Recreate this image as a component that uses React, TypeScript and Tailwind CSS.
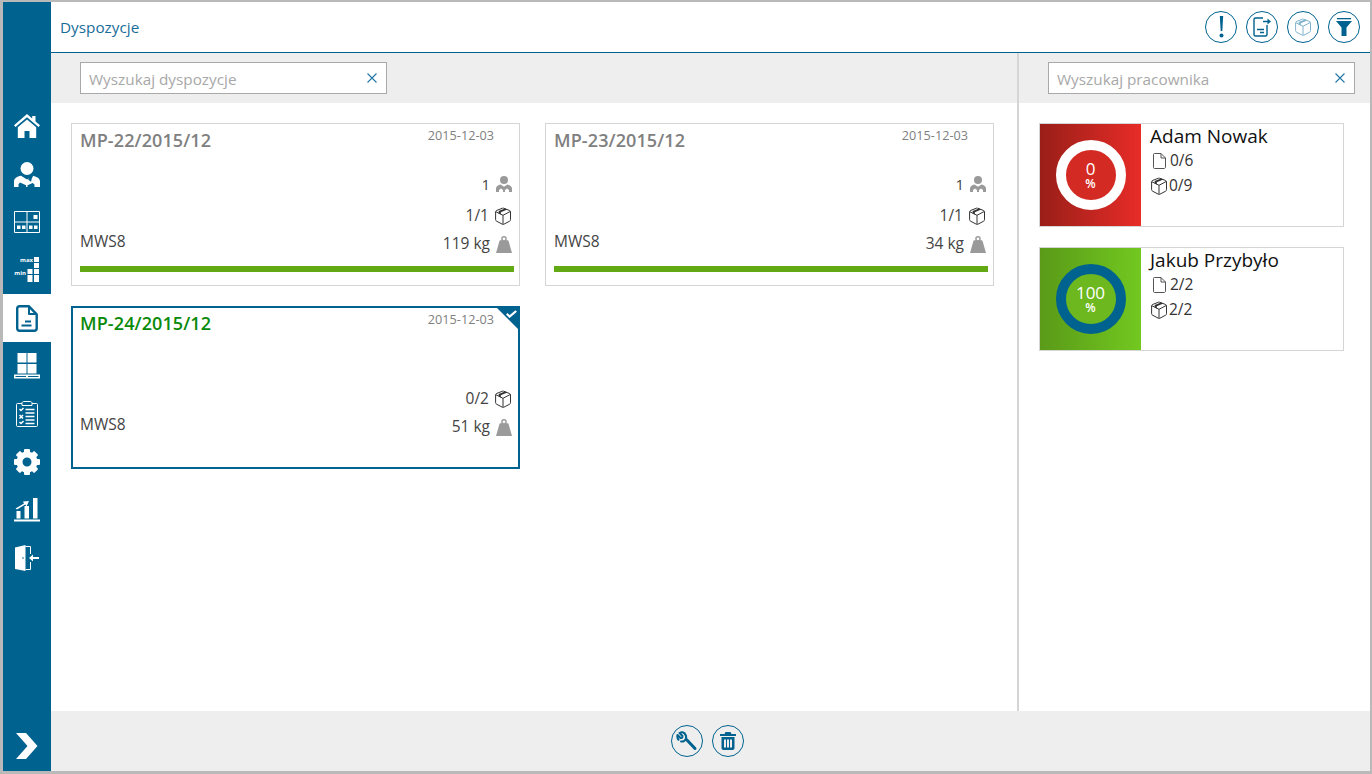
import type { ReactNode } from "react";

const font = { fontFamily: '"Open Sans", "Noto Sans", sans-serif' };

const BoxIcon = ({ color = "#333" }: { color?: string }) => (
  <svg width="18" height="18" viewBox="0 0 18 18" fill="none">
    <path d="M2.800 3.400 8.500 1.200c.4-.1.800-.1 1.100 0l5.700 2.200c.7.300 1.200.7 1.200 1.500v7.800c0 .7-.3 1.200-.9 1.500l-5.900 3.100c-.4.200-.8.200-1.200 0L2.600 14.200c-.6-.3-1-.8-1-1.500V4.900c0-.8.500-1.200 1.200-1.500Z" stroke={color} strokeWidth="1" />
    <path d="M2 4.800l7 3.500 7.200-3.800M9 8.300V17.200" stroke={color} strokeWidth="1" />
    <path d="M4.700 6.500V4l6.300-2.400 2.300.9L6.800 5.200v2.300Z" fill={color} />
  </svg>
);

const PersonIcon = () => (
  <svg width="16" height="16" viewBox="0 0 16 16" fill="#9a9a9a">
    <circle cx="8" cy="4" r="4" />
    <path d="M0 16v-3.500C0 10.500 2 9.200 4.500 8.600L8 10.800l3.500-2.200c2.500.6 4.500 1.900 4.500 3.900V16h-3v-2l-2-1.500L9 14v2H7v-2l-2-1.500L3 14v2Z" />
  </svg>
);

const WeightIcon = () => (
  <svg width="16" height="17" viewBox="0 0 16 17" fill="#9a9a9a">
    <path d="M8 0a2.800 2.800 0 0 1 2.800 2.800c0 .5-.1 1-.4 1.400h1.300c.4 0 .7.200.8.600L16 17H0L3.500 4.800c.1-.4.400-.6.800-.6h1.300c-.3-.4-.4-.9-.4-1.400A2.800 2.800 0 0 1 8 0Zm0 1.400a1.400 1.400 0 1 0 0 2.800 1.400 1.400 0 0 0 0-2.800Z" fillRule="evenodd" />
  </svg>
);

const PageIcon = () => (
  <svg width="13" height="16" viewBox="0 0 13 16" fill="none" stroke="#555" strokeWidth="1">
    <path d="M1.500.5h6.500l4.500 4.500v9c0 .8-.5 1.500-1.300 1.500H1.500C.9 15.500.5 15 .5 14.300V1.500c0-.6.4-1 1-1Z" />
    <path d="M8 .5V5h4.500" />
  </svg>
);

const HomeIcon = () => (
  <svg width="26" height="24" viewBox="0 0 26 24" fill="#fff">
    <path d="M13 0 0 11.300l1.500 1.700L13 3.200 24.500 13l1.500-1.700-4.500-3.900V2h-3.300v2.600Z" />
    <path d="M13 5.500 3.800 13.300V24h6.700v-7h5v7h6.700V13.300Z" />
  </svg>
);

const UserIcon = () => (
  <svg width="26" height="25" viewBox="0 0 26 25" fill="#fff">
    <circle cx="13" cy="6.500" r="6.500" />
    <path d="M0 25v-5.500c0-3.300 3-5 7-5.800l6 3.800 2-1.200-.8 1.500 2.800 2 .8-3.300 1.400-2.800c3.600 1 6.800 2.600 6.800 5.800V25h-5.500v-2.500l-1.800-1.500-5.200 2.200V25h-1.400v-1.800L6 20.500 4.500 22.300V25Z" />
  </svg>
);

const GridIcon = () => (
  <svg width="26" height="22" viewBox="0 0 26 22" fill="none" stroke="#fff" strokeWidth="1">
    <path d="M.5.500h25v21H.5ZM.5 11h25M13 .5v21" />
    <g fill="#fff" stroke="none">
      <rect x="19.500" y="4" width="4" height="4" />
      <rect x="3" y="14.500" width="3.500" height="3.500" />
      <rect x="8" y="14.500" width="3.500" height="3.500" />
      <rect x="15" y="14.500" width="3.500" height="3.500" />
      <rect x="20" y="14.500" width="3.500" height="3.500" />
    </g>
  </svg>
);

const MaxMinIcon = () => (
  <div className="relative h-[26px] w-[26px]">
    <span className="absolute right-[7px] top-[0px] text-[6px] font-bold leading-[6px] text-white">max</span>
    <span className="absolute right-[14px] top-[13px] text-[6px] font-bold leading-[6px] text-white">min</span>
    <svg className="absolute inset-0" width="26" height="26" viewBox="0 0 26 26" fill="#fff">
      <rect x="20" y="0" width="5" height="5" />
      <rect x="20" y="6" width="5" height="5" />
      <rect x="20" y="12" width="5" height="5" />
      <rect x="13.500" y="12" width="5" height="5" />
      <rect x="20" y="18" width="5" height="7" />
      <rect x="13.500" y="18" width="5" height="7" />
    </svg>
  </div>
);

const DocIcon = () => (
  <svg width="22" height="27" viewBox="0 0 22 27" fill="none" stroke="#00628f" strokeWidth="2.400" strokeLinejoin="round">
    <path d="M3.500 1.300h9.500l7.700 8v13.900c0 1.900-1.100 2.600-2.500 2.600H3.500c-1.400 0-2.300-.9-2.300-2.600V3.500c0-1.400.9-2.200 2.300-2.200Z" />
    <path d="M13 1.300V9h7.700" strokeWidth="2" />
    <path d="M9 16.500h6M5.500 20.500h10" strokeWidth="1.800" />
  </svg>
);

const PalletIcon = () => (
  <svg width="26" height="26" viewBox="0 0 26 26" fill="#fff">
    <rect x="3.500" y="0" width="9" height="9.500" />
    <rect x="13.500" y="0" width="9" height="9.500" />
    <rect x="3.500" y="11" width="9" height="9.500" />
    <rect x="13.500" y="11" width="9" height="9.500" />
    <path d="M0 21.500h26V25.500H0Zm1.500 1.500v1h23v-1Z" fillRule="evenodd" />
    <rect x="12" y="22" width="2" height="3" />
  </svg>
);

const ClipboardIcon = () => (
  <svg width="22" height="26" viewBox="0 0 22 26" fill="none" stroke="#fff">
    <path d="M6 2.500H1.500c-.6 0-1 .4-1 1v21c0 .6.4 1 1 1h19c.6 0 1-.4 1-1v-21c0-.6-.4-1-1-1H16" strokeWidth="1" />
    <path d="M6 4.500V2.200C6 1 7 .5 8 .5h6c1 0 2 .5 2 1.700v2.300Z" strokeWidth="1" />
    <path d="M3.500 8 5 9.500l2.500-2.500M3.500 14l3.500 3.500M7 14l-3.500 3.500M3.500 21l1.500 1.500 2.500-2.500" strokeWidth="1.500" />
    <path d="M9.500 8.500h9M9.500 12h9M9.500 15.500h9M9.500 19h9M9.500 22.500h9" strokeWidth="1.500" />
  </svg>
);

const GearIcon = () => (
  <svg width="26" height="26" viewBox="0 0 26 26" fill="#fff">
    {[0, 45, 90, 135, 180, 225, 270, 315].map((a) => (
      <rect key={a} x="10" y="0" width="6" height="6" rx="1" transform={`rotate(${a} 13 13)`} />
    ))}
    <circle cx="13" cy="13" r="7.500" fill="none" stroke="#fff" strokeWidth="6" />
  </svg>
);

const ChartIcon = () => (
  <svg width="26" height="24" viewBox="0 0 26 24" fill="#fff">
    <rect x="0" y="21.500" width="26" height="2" />
    <rect x="2.500" y="13" width="4" height="7.500" />
    <rect x="10.500" y="8" width="4.500" height="12.500" />
    <rect x="19" y="0" width="4.500" height="20.500" />
    <path d="M1.500 10.500 10 5.500 9 3.500l6-.5-2.500 5.500-1.200-2L3 11.500Z" />
  </svg>
);

const DoorIcon = () => (
  <svg width="26" height="26" viewBox="0 0 26 26" fill="#fff">
    <path d="M1 2.500 11.500 0v26L1 24Z" />
    <circle cx="9" cy="13" r=".8" fill="#00628f" />
    <path d="M11.500 1.500H16.500V9M16.500 17V24.500H11.500" fill="none" stroke="#fff" strokeWidth="1" />
    <path d="M15 13l4-3.500V12h6v2h-6v2.500Z" />
  </svg>
);

const ChevronIcon = () => (
  <svg width="22" height="26" viewBox="0 0 22 26" fill="#fff">
    <path d="M0 0h10l11.500 13L10 26H0l11.500-13Z" />
  </svg>
);

const RoundButton = ({ children }: { children: ReactNode }) => (
  <div className="flex h-[32px] w-[32px] items-center justify-center rounded-full border-[1.500px] border-[#00628f]">
    {children}
  </div>
);

const NAV = [
  <HomeIcon key="home" />,
  <UserIcon key="user" />,
  <GridIcon key="grid" />,
  <MaxMinIcon key="maxmin" />,
  <DocIcon key="doc" />,
  <PalletIcon key="pallet" />,
  <ClipboardIcon key="clip" />,
  <GearIcon key="gear" />,
  <ChartIcon key="chart" />,
  <DoorIcon key="door" />,
];

const SearchBox = ({ placeholder }: { placeholder: string }) => (
  <div className="flex h-[32px] w-[307px] items-center justify-between border border-[#a9a9a9] bg-white pl-2 pr-[9px]">
    <span className="pt-[3px] text-[15.300px] text-[#a8a8a8]">{placeholder}</span>
    <svg width="10" height="10" viewBox="0 0 10 10" stroke="#1f78a4" strokeWidth="1.100" fill="none">
      <path d="M.5.500l9 9M9.500.500l-9 9" />
    </svg>
  </div>
);

type Order = {
  no: string;
  people?: string;
  boxes: string;
  kg: string;
  selected?: boolean;
  done?: boolean;
};

const ORDERS: Order[] = [
  { no: "MP-22/2015/12", people: "1", boxes: "1/1", kg: "119 kg", done: true },
  { no: "MP-23/2015/12", people: "1", boxes: "1/1", kg: "34 kg", done: true },
  { no: "MP-24/2015/12", boxes: "0/2", kg: "51 kg", selected: true },
];

const OrderCard = ({ order }: { order: Order }) => (
  <div
    className={`relative flex h-[163px] w-[449px] flex-col ${
      order.selected ? "border-2 border-[#00628f] pl-[7px] pr-[6px]" : "border border-[#d5d5d5] pl-[8px] pr-[7px]"
    }`}
  >
    {order.selected && (
      <>
        <div className="absolute right-[-2px] top-[-2px] h-0 w-0 border-l-[25px] border-t-[25px] border-l-transparent border-t-[#00628f]" />
        <svg className="absolute right-[1px] top-[2px]" width="11" height="8" viewBox="0 0 11 8" fill="none" stroke="#fff" strokeWidth="2.200">
          <path d="M.8 3.800l2.800 2.800L10.200 1" />
        </svg>
      </>
    )}
    <div className="flex items-start justify-between pr-[18px]">
      <span className={`text-[18px] font-semibold leading-[26px] tracking-[0.1px] ${order.selected ? "mt-[2px] text-[#0a8a0a]" : "mt-[3px] text-[#808080]"}`}>
        {order.no}
      </span>
      <span className="mt-[2px] text-[12.700px] leading-[18px] text-[#808080]">2015-12-03</span>
    </div>
    <div className={order.selected ? "h-[18px]" : "h-[18px]"} />
    <div className="flex h-[26px] items-center justify-end gap-[6px] text-[15px] text-[#444]">
      {order.people && (
        <>
          <span>{order.people}</span>
          <PersonIcon />
        </>
      )}
    </div>
    <div className="mt-[6px] flex h-[26px] items-center justify-end gap-[5px] text-[15.500px] text-[#444]">
      <span>{order.boxes}</span>
      <BoxIcon />
    </div>
    <div className="mt-[2px] flex h-[26px] items-center justify-between text-[15.500px] text-[#444]">
      <span className="-mt-[4px]">MWS8</span>
      <span className="flex items-center gap-[6px]">
        {order.kg}
        <WeightIcon />
      </span>
    </div>
    {order.done && <div className="mt-[9px] h-[6px] w-[434px] bg-[#63a914]" />}
  </div>
);

type Worker = {
  name: string;
  percent: string;
  docs: string;
  boxes: string;
  gradient: string;
  ring: string;
  inner: string;
};

const WORKERS: Worker[] = [
  {
    name: "Adam Nowak",
    percent: "0",
    docs: "0/6",
    boxes: "0/9",
    gradient: "bg-gradient-to-r from-[#9a1e18] to-[#e82c28]",
    ring: "border-white",
    inner: "bg-[#d42a24]",
  },
  {
    name: "Jakub Przybyło",
    percent: "100",
    docs: "2/2",
    boxes: "2/2",
    gradient: "bg-gradient-to-r from-[#5a9a18] to-[#72c820]",
    ring: "border-[#00628f]",
    inner: "bg-[#6cb81e]",
  },
];

const WorkerCard = ({ worker }: { worker: Worker }) => (
  <div className="flex h-[104px] w-[305px] border border-[#d5d5d5]">
    <div className={`flex h-full w-[101px] items-center justify-center ${worker.gradient}`}>
      <div className={`flex h-[70px] w-[70px] flex-col items-center justify-center rounded-full border-[10px] ${worker.ring} ${worker.inner} text-white`}>
        <span className="text-[17px] leading-[18px]">{worker.percent}</span>
        <span className="text-[12px] font-semibold leading-[12px]">%</span>
      </div>
    </div>
    <div className="flex flex-col pl-[9px] text-[#333]">
      <span className="text-[19px] leading-[24px] text-[#111]">{worker.name}</span>
      <div className="mt-[1px] flex h-[24px] items-center gap-[4px] pl-[3px] text-[15.500px]">
        <PageIcon />
        {worker.docs}
      </div>
      <div className="mt-[1px] flex h-[24px] items-center gap-[1px] text-[15.500px]">
        <BoxIcon />
        {worker.boxes}
      </div>
    </div>
  </div>
);

export default function App() {
  return (
    <div style={font} className="h-[774px] w-[1372px] overflow-hidden bg-white">
      <div className="flex h-full w-full border-b-[3px] border-l-[3px] border-r-2 border-t-2 border-[#b9b9b9]">
        <aside className="flex w-[48px] shrink-0 flex-col bg-[#00628f] pt-[100px]">
          {NAV.map((icon, i) => (
            <div key={i} className={`flex h-[48px] items-center justify-center ${i === 4 ? "bg-white" : ""}`}>
              {icon}
            </div>
          ))}
          <div className="mt-auto flex h-[60px] items-center justify-center pt-[10px]">
            <ChevronIcon />
          </div>
        </aside>

        <main className="flex min-w-0 flex-1 flex-col">
          <header className="flex h-[51px] shrink-0 items-center justify-between border-b border-[#00628f] pl-[9px] pr-[10px]">
            <span className="text-[15.300px] text-[#1a6d99]">Dyspozycje</span>
            <div className="flex gap-[9px]">
              <RoundButton>
                <svg width="5" height="22" viewBox="0 0 5 22" fill="#00628f">
                  <path d="M.8 0h3.400L3.300 15H1.700Z" />
                  <circle cx="2.500" cy="19.500" r="2" />
                </svg>
              </RoundButton>
              <RoundButton>
                <svg width="20" height="20" viewBox="0 0 20 20" fill="none" stroke="#00628f" strokeWidth="1.400">
                  <path d="M11 1H3.500C2.500 1 2 1.500 2 2.500v15c0 1 .5 1.500 1.500 1.500h10c1 0 1.500-.5 1.500-1.500V8" />
                  <path d="M5 12.500h7M8 15.500h4" />
                  <path d="M11 4.500h5" strokeWidth="1.500" />
                  <path d="M15.500 1.500l3.500 3-3.500 3Z" fill="#00628f" stroke="none" />
                </svg>
              </RoundButton>
              <RoundButton>
                <BoxIcon color="#7fb3cc" />
              </RoundButton>
              <RoundButton>
                <svg width="16" height="18" viewBox="0 0 16 18" fill="#00628f">
                  <rect x="1" y="0" width="14" height="1.300" />
                  <path d="M0 3h16l-5.500 6.500V18h-5V9.500Z" />
                </svg>
              </RoundButton>
            </div>
          </header>

          <div className="flex min-h-0 flex-1">
            <section className="flex w-[966px] shrink-0 flex-col">
              <div className="flex h-[50px] items-center bg-[#eeeeee] pl-[29px]">
                <SearchBox placeholder="Wyszukaj dyspozycje" />
              </div>
              <div className="grid grid-cols-[449px_449px] gap-x-[25px] gap-y-[20px] pl-[20px] pt-[20px]">
                {ORDERS.map((o) => (
                  <OrderCard key={o.no} order={o} />
                ))}
              </div>
            </section>

            <section className="flex flex-1 flex-col border-l-2 border-[#d5d5d5]">
              <div className="flex h-[50px] items-center bg-[#eeeeee] pl-[29px]">
                <SearchBox placeholder="Wyszukaj pracownika" />
              </div>
              <div className="flex flex-col gap-[20px] pl-[20px] pt-[20px]">
                {WORKERS.map((w) => (
                  <WorkerCard key={w.name} worker={w} />
                ))}
              </div>
            </section>
          </div>

          <footer className="flex h-[60px] shrink-0 items-center justify-center gap-[9px] bg-[#eeeeee] pr-[6px]">
            <RoundButton>
              <svg width="22" height="22" viewBox="0 0 22 22" fill="none" stroke="#00628f" strokeLinecap="round">
                <path d="M7.500 3.200C6.200 2.200 4.200 2 2.500 3l3 3-.3 1.700-1.700.3-3-3C.2 6.500.3 8.500 1.500 9.800" transform="translate(1 0)" strokeWidth="2" strokeLinejoin="round" />
                <path d="M8.500 3.500c1.500 1.300 2 3.500 1.300 5.300-.8 1.800-2.800 3-4.800 2.700" strokeWidth="2" />
                <path d="M10.500 9.500 19 18.500" strokeWidth="3" />
              </svg>
            </RoundButton>
            <RoundButton>
              <svg width="16" height="18" viewBox="0 0 16 18" fill="#00628f">
                <path d="M5.500 0h5l1 2H16v2H0V2h4.500Z" />
                <path d="M1.500 5h13v11c0 1.200-.8 2-2 2h-9c-1.200 0-2-.8-2-2Zm2.500 2.500v8h2v-8Zm3 0v8h2v-8Zm3 0v8h2v-8Z" fillRule="evenodd" />
              </svg>
            </RoundButton>
          </footer>
        </main>
      </div>
    </div>
  );
}
